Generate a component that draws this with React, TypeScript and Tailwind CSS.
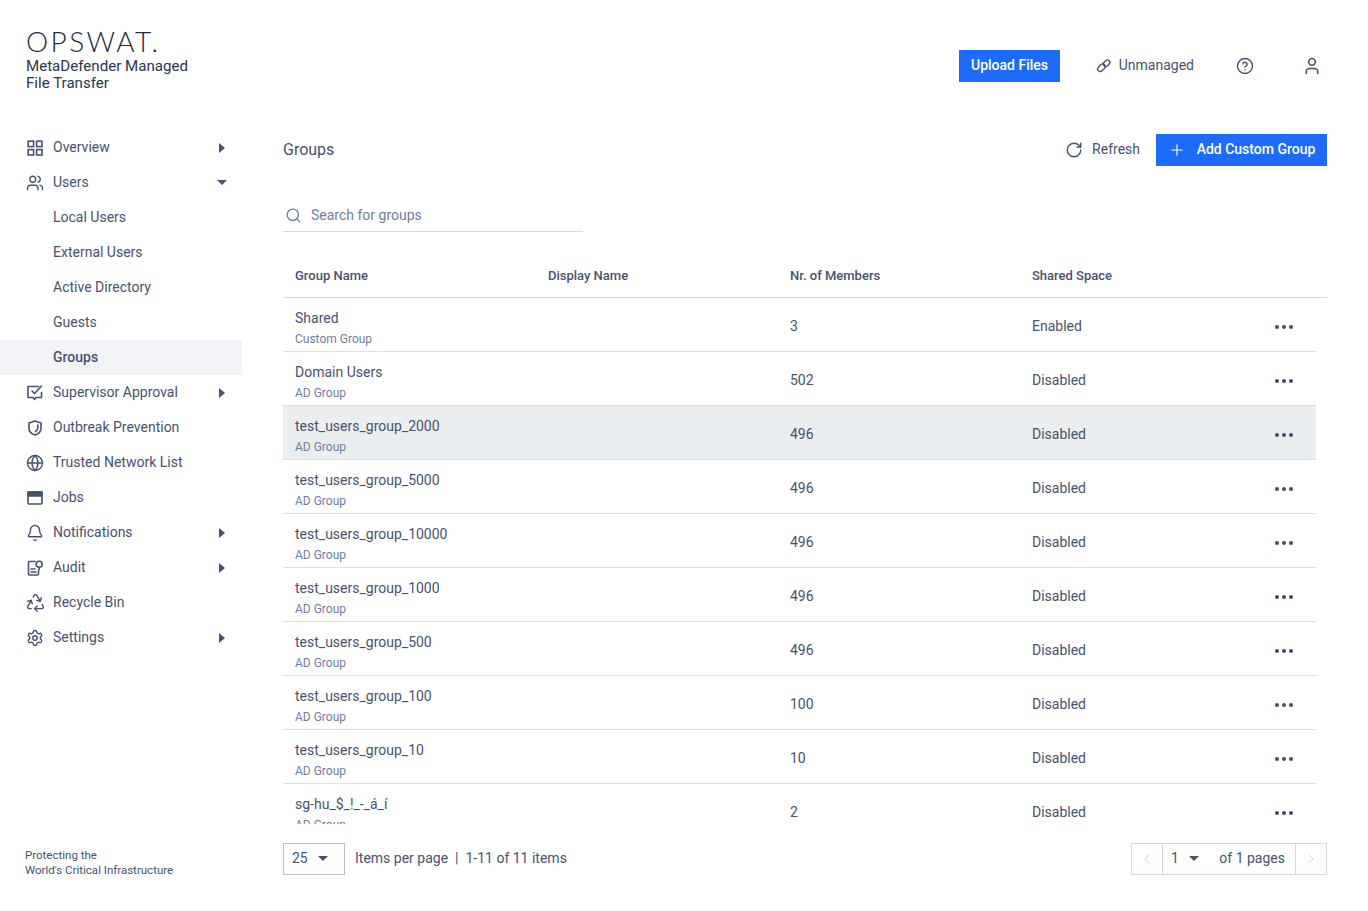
import { ChevronLeft, ChevronRight, CircleHelp, Globe, Plus, Recycle, RotateCw, Search, Settings, Bell, User, Users } from "lucide-react"
import type { ReactNode } from "react"

const CaretRight = () => (
  <svg width="6" height="10" viewBox="0 0 6 10"><path d="M0 0 L6 5 L0 10 Z" fill="#47526f" /></svg>
)
const CaretDown = () => (
  <svg width="10" height="5" viewBox="0 0 10 5"><path d="M0 0 H10 L5 5 Z" fill="#47526f" /></svg>
)

const Svg = ({ children }: { children: ReactNode }) => (
  <svg width="18" height="18" viewBox="0 0 18 18" fill="none" stroke="#47526f" strokeWidth="1.6" strokeLinecap="round" strokeLinejoin="round">
    {children}
  </svg>
)

const OverviewIcon = () => (
  <Svg>
    <rect x="2.2" y="2.2" width="5.4" height="5.4" strokeLinejoin="miter" />
    <rect x="10.6" y="2.2" width="5.4" height="5.4" strokeLinejoin="miter" />
    <rect x="2.2" y="10.6" width="5.4" height="5.4" strokeLinejoin="miter" />
    <rect x="10.6" y="10.6" width="5.4" height="5.4" strokeLinejoin="miter" />
  </Svg>
)
const ApprovalIcon = () => (
  <Svg>
    <path d="M12.5 2.5H2v11h5l1.5 2 1.5-2h5.5V8.5" />
    <path d="M6 7l2.5 2.5L15.5 2" />
  </Svg>
)
const ShieldIcon = () => (
  <Svg>
    <path d="M9 2l6 2v5c0 3.5-2.6 6-6 7-3.4-1-6-3.5-6-7V4z" />
    <path d="M11.8 6v3c0 1.6-1 2.8-2.4 3.6" />
  </Svg>
)
const JobsIcon = () => (
  <Svg>
    <rect x="2" y="3" width="14" height="12" rx="1" />
    <rect x="2" y="3" width="14" height="4" fill="#47526f" />
  </Svg>
)
const AuditIcon = () => (
  <Svg>
    <path d="M9 2.5H3.5a1 1 0 0 0-1 1V15a1 1 0 0 0 1 1h8a1 1 0 0 0 1-1v-4" />
    <circle cx="13.2" cy="5.3" r="3" />
    <path d="M13.2 8.3v2M5 10h4M5 13h5" />
  </Svg>
)
const LinkIcon = () => (
  <svg width="16" height="16" viewBox="0 0 16 16" fill="none" stroke="#47526f" strokeWidth="1.4">
    <rect x="1.2" y="7.2" width="8.6" height="5.2" rx="2.6" transform="rotate(-45 5.5 9.8)" />
    <rect x="7.2" y="2.7" width="7.2" height="5" rx="2.5" transform="rotate(-45 10.8 5.2)" />
  </svg>
)

const iconProps = { size: 18, strokeWidth: 1.9, color: "#47526f" }

type NavRow = { label: string; icon?: ReactNode; caret?: "right" | "down"; active?: boolean }

const nav: NavRow[] = [
  { label: "Overview", icon: <OverviewIcon />, caret: "right" },
  { label: "Users", icon: <Users {...iconProps} />, caret: "down" },
  { label: "Local Users" },
  { label: "External Users" },
  { label: "Active Directory" },
  { label: "Guests" },
  { label: "Groups", active: true },
  { label: "Supervisor Approval", icon: <ApprovalIcon />, caret: "right" },
  { label: "Outbreak Prevention", icon: <ShieldIcon /> },
  { label: "Trusted Network List", icon: <Globe {...iconProps} /> },
  { label: "Jobs", icon: <JobsIcon /> },
  { label: "Notifications", icon: <Bell {...iconProps} />, caret: "right" },
  { label: "Audit", icon: <AuditIcon />, caret: "right" },
  { label: "Recycle Bin", icon: <Recycle size={21} strokeWidth={1.6} color="#47526f" className="-ml-[1.5px]" /> },
  { label: "Settings", icon: <Settings {...iconProps} />, caret: "right" },
]

const rows = [
  { name: "Shared", type: "Custom Group", members: "3", space: "Enabled" },
  { name: "Domain Users", type: "AD Group", members: "502", space: "Disabled" },
  { name: "test_users_group_2000", type: "AD Group", members: "496", space: "Disabled", hover: true },
  { name: "test_users_group_5000", type: "AD Group", members: "496", space: "Disabled" },
  { name: "test_users_group_10000", type: "AD Group", members: "496", space: "Disabled" },
  { name: "test_users_group_1000", type: "AD Group", members: "496", space: "Disabled" },
  { name: "test_users_group_500", type: "AD Group", members: "496", space: "Disabled" },
  { name: "test_users_group_100", type: "AD Group", members: "100", space: "Disabled" },
  { name: "test_users_group_10", type: "AD Group", members: "10", space: "Disabled" },
  { name: "sg-hu_$_!_-_á_í", type: "AD Group", members: "2", space: "Disabled" },
]

export default function App() {
  return (
    <div className="flex h-[911px] w-[1368px] flex-col overflow-hidden bg-white font-['Roboto',sans-serif] text-[14px] text-[#47526f]">
      {/* Header */}
      <header className="flex h-[130px] shrink-0 justify-between pl-[26px] pr-[46px]">
        <div className="pt-[24px]">
          <div className="h-[31px] font-['Lato',sans-serif] text-[28px] font-light leading-[34px] tracking-[2.4px] text-[#1d2b45]">OPSWAT.</div>
          <div className="mt-[3px] w-[180px] text-[15.1px] leading-[17px] text-[#2b3650]">MetaDefender Managed File Transfer</div>
        </div>
        <div className="flex h-[132px] items-center">
          <button className="flex h-[32px] w-[101px] items-center justify-center bg-[#1d6bfc] pb-[1px] font-medium text-white">Upload Files</button>
          <div className="ml-[36px] flex w-[98px] items-center gap-[7px] pb-[1px]">
            <LinkIcon />
            <span>Unmanaged</span>
          </div>
          <div className="ml-[42px]"><CircleHelp size={18} strokeWidth={1.9} color="#47526f" /></div>
          <div className="ml-[48px]"><User size={20} strokeWidth={1.9} color="#47526f" /></div>
        </div>
      </header>

      <div className="flex min-h-0 flex-1">
        {/* Sidebar */}
        <aside className="flex w-[242px] shrink-0 flex-col justify-between">
          <nav>
            {nav.map((item) => (
              <div key={item.label} className={`flex h-[35px] items-center pl-[26px] pr-[14px] ${item.active ? "bg-[#f1f3f7] font-medium" : ""}`}>
                <span className="flex w-[27px] shrink-0 items-center">{item.icon}</span>
                <span className="flex-1">{item.label}</span>
                <span className="flex w-[12px] justify-center">
                  {item.caret === "right" && <CaretRight />}
                  {item.caret === "down" && <CaretDown />}
                </span>
              </div>
            ))}
          </nav>
          <div className="pb-[33px] pl-[25px] text-[11.5px] leading-[15px]">
            <div>Protecting the</div>
            <div>World's Critical Infrastructure</div>
          </div>
        </aside>

        {/* Main */}
        <main className="ml-[41px] flex min-w-0 w-[1044px] flex-col">
          <div className="flex h-[36px] shrink-0 items-center justify-between pt-[4px]">
            <h1 className="text-[16px]">Groups</h1>
            <div className="flex items-center">
              <RotateCw size={18} strokeWidth={1.9} color="#47526f" />
              <span className="ml-[9px] mr-[16px] pb-[1px]">Refresh</span>
              <button className="flex h-[32px] w-[171px] items-center justify-center gap-[11px] bg-[#1d6bfc] pb-[1px] font-medium text-white">
                <Plus size={18} strokeWidth={1.6} />
                Add Custom Group
              </button>
            </div>
          </div>

          <div className="mt-[31px] flex h-[35px] w-[300px] shrink-0 items-center border-b border-[#d3d9e8] pl-[2px] pt-[2px] text-[#707ea0]">
            <Search size={17} strokeWidth={1.9} color="#707ea0" />
            <span className="ml-[9px]">Search for groups</span>
          </div>

          <div className="mt-[21px] grid h-[45px] shrink-0 grid-cols-[253px_242px_242px_1fr] items-center border-b border-[#d3d9e8] pl-[12px] pt-[1px] text-[13px] font-medium">
            <span>Group Name</span>
            <span>Display Name</span>
            <span>Nr. of Members</span>
            <span>Shared Space</span>
          </div>

          <div className="h-[526px] shrink-0 overflow-hidden pr-[11px]">
            {rows.map((r) => (
              <div key={r.name} className={`grid h-[54px] grid-cols-[253px_242px_242px_1fr_auto] items-center border-b border-[#dcdee3] pl-[12px] pr-[23px] ${r.hover ? "bg-[#ebeef0]" : ""}`}>
                <div className="pt-[6px]">
                  <div className="leading-[20px]">{r.name}</div>
                  <div className="mt-[3px] text-[12px] leading-[16px] text-[#707ea0]">{r.type}</div>
                </div>
                <span />
                <span className="pt-[4px]">{r.members}</span>
                <span className="pt-[4px]">{r.space}</span>
                <span className="flex gap-[3px] pt-[5px]">
                  <i className="size-[4px] rounded-full bg-[#3f4c6b]" />
                  <i className="size-[4px] rounded-full bg-[#3f4c6b]" />
                  <i className="size-[4px] rounded-full bg-[#3f4c6b]" />
                </span>
              </div>
            ))}
          </div>

          <div className="mt-[19px] flex shrink-0 items-center justify-between">
            <div className="flex items-center">
              <div className="flex h-[32px] w-[62px] items-center gap-[10px] border border-[#b4c2de] pl-[8px] pb-[1px]">
                25 <CaretDown />
              </div>
              <span className="ml-[10px] pb-[1px]">Items per page</span>
              <span className="mx-[7px] pb-[1px]">|</span>
              <span className="pb-[1px]">1-11 of 11 items</span>
            </div>
            <div className="flex h-[32px] w-[196px] items-center border border-[#d3d9e8]">
              <span className="flex h-full w-[31px] items-center justify-center border-r border-[#d3d9e8]"><ChevronLeft size={16} strokeWidth={1.5} color="#c8cfe0" /></span>
              <span className="ml-[8px] flex items-center gap-[10px] pb-[1px]">1 <CaretDown /></span>
              <span className="ml-auto mr-[10px] pb-[1px]">of 1 pages</span>
              <span className="flex h-full w-[31px] items-center justify-center border-l border-[#d3d9e8]"><ChevronRight size={16} strokeWidth={1.5} color="#c8cfe0" /></span>
            </div>
          </div>
        </main>
      </div>
    </div>
  )
}
